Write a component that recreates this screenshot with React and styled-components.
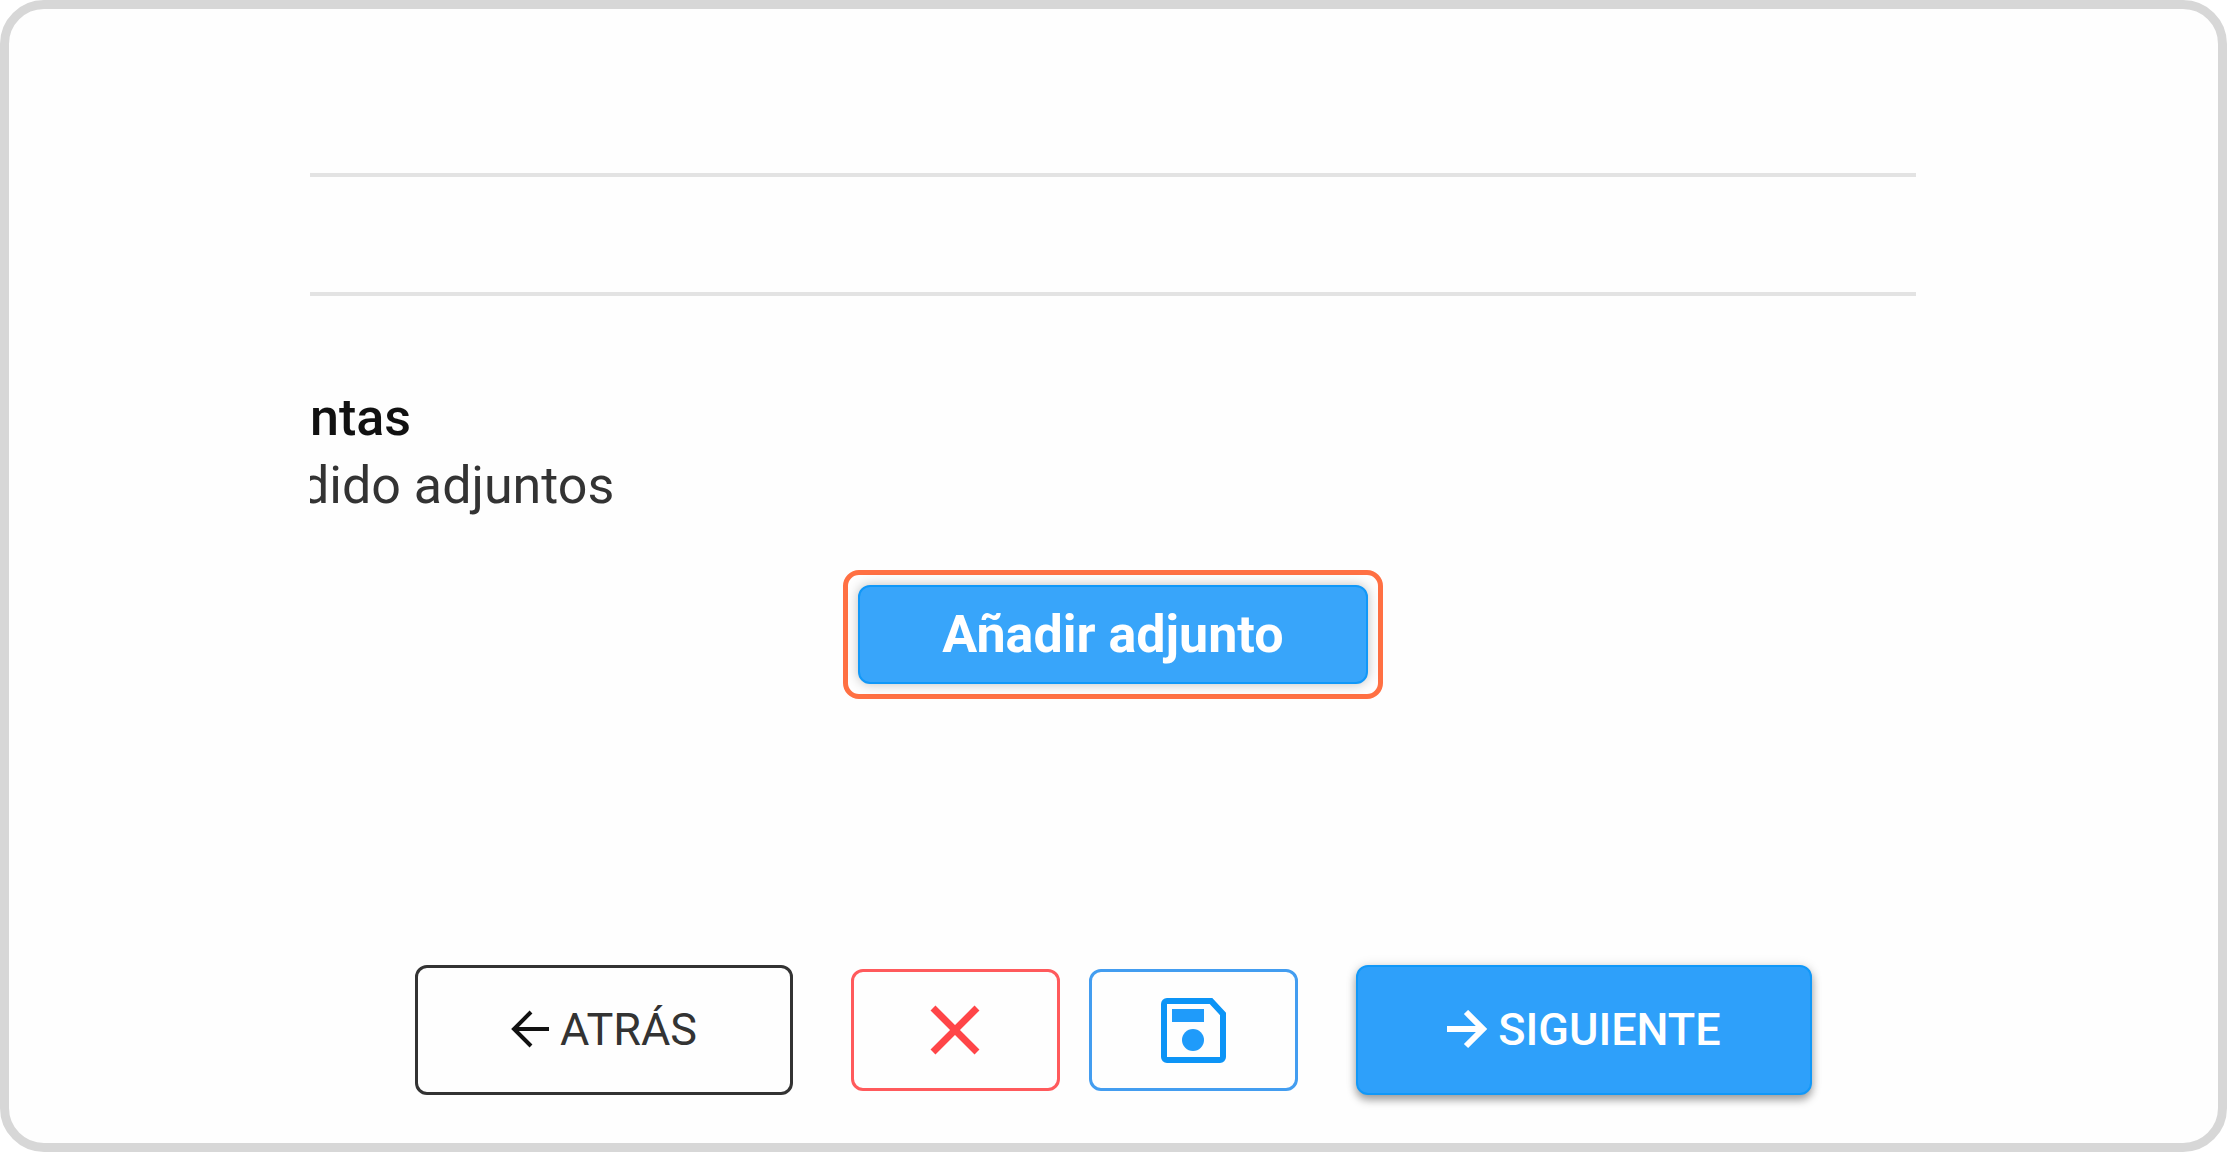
import React from "react"
import styled, { createGlobalStyle, css } from "styled-components"

const GlobalStyle = createGlobalStyle`
  * {
    box-sizing: border-box;
  }
  body {
    margin: 0;
    background: #fff;
    font-family: Roboto, "Liberation Sans", sans-serif;
  }
`;

const Frame = styled.div`
  display: flex;
  flex-direction: column;
  min-height: 100vh;
  padding: 0 302px 48px 301px;
  border: 9px solid #d7d7d7;
  border-radius: 44px;
  background: #fefefe;
`;

/*
* empty rows of the form, above the attachments
*/
const FormRow = styled.div`
  height: ${props => props.$tall ? '168px' : '119px'};
  border-bottom: 4px solid #e3e3e3;
`;

/*
* attachments block
*/
const Attachments = styled.section`
  display: flex;
  flex-direction: column;
  margin-top: 88px;
`;
const TextLine = styled.p`
  margin: 0;
  overflow: hidden;
  white-space: nowrap;
  font-size: 52px;
  line-height: 68px;
  color: #333;
`;
const Title = styled(TextLine).attrs({ as: 'h2' })`
  font-weight: 500;
  color: #111;
`;
// the line starts in the middle of its first letter
const Status = styled(TextLine)`
  text-indent: -10px;
`;
const Highlight = styled.div`
  align-self: center;
  margin-top: 50px;
  padding: 10px;
  border: 5px solid #ff7043;
  border-radius: 16px;
`;

const Button = styled.button`
  display: flex;
  align-items: center;
  justify-content: center;
  gap: 10px;
  padding: 0;
  border: 3px solid currentColor;
  border-radius: 12px;
  background: transparent;
  font-family: inherit;
  font-size: 45px;
  line-height: 52px;
  cursor: pointer;
`;
const filled = css`
  border: 2px solid #1198f8;
  background: ${props => props.$light ? '#38a5fa' : '#2ea0fa'};
  color: #fff;
`;
const AddButton = styled(Button)`
  ${filled}
  width: 510px;
  height: 99px;
  font-size: 52px;
  font-weight: 700;
  box-shadow: 0 0 12px rgba(0, 0, 0, 0.25);
`;
const BackButton = styled(Button)`
  width: 378px;
  height: 130px;
  color: #333;
`;
const NextButton = styled(Button)`
  ${filled}
  width: 456px;
  height: 130px;
  font-weight: 500;
  box-shadow: 0 5px 8px rgba(0, 0, 0, 0.35), 0 0 12px rgba(0, 0, 0, 0.1);
`;
const IconButton = styled(Button)`
  width: 209px;
  height: 122px;
  color: ${props => props.$danger ? '#ff5a5c' : '#439df0'};
`;

const Actions = styled.div`
  display: flex;
  align-items: center;
  justify-content: center;
  gap: 58px;
  margin-top: auto;
`;
const IconGroup = styled.div`
  display: flex;
  gap: 29px;
`;

function ArrowLeft() {
  return (
    <svg width="40" height="40" viewBox="0 0 40 40" fill="none" stroke="#111" strokeWidth="4" aria-hidden="true">
      <path d="M39 19H4M21 2L4 19l17 17" />
    </svg>
  )
}
function ArrowRight() {
  return (
    <svg width="42" height="40" viewBox="0 0 42 40" fill="none" stroke="#fff" strokeWidth="6" aria-hidden="true">
      <path d="M1 19h36M20 2l17 17-17 17" />
    </svg>
  )
}
function CloseIcon() {
  return (
    <svg width="50" height="50" viewBox="0 0 50 50" fill="none" stroke="#ff4548" strokeWidth="7" aria-hidden="true">
      <path d="M3 3l44 44M47 3L3 47" />
    </svg>
  )
}
function SaveIcon() {
  return (
    <svg width="65" height="65" viewBox="0 0 65 65" aria-hidden="true">
      <path
        d="M6 3h44l12 13v43a3 3 0 0 1-3 3H6a3 3 0 0 1-3-3V6a3 3 0 0 1 3-3z"
        fill="none"
        stroke="#0c94f6"
        strokeWidth="6"
      />
      <rect x="11" y="11" width="32" height="13" fill="#1f9bfa" />
      <circle cx="32" cy="42" r="11" fill="#1f9bfa" />
    </svg>
  )
}

export default function App() {
  return (
    <React.Fragment>
      <GlobalStyle />
      <Frame>
        <FormRow $tall />
        <FormRow />
        <Attachments>
          <Title>ntas</Title>
          <Status>dido adjuntos</Status>
          <Highlight>
            <AddButton type="button" $light>Añadir adjunto</AddButton>
          </Highlight>
        </Attachments>
        <Actions>
          <BackButton type="button"><ArrowLeft />ATRÁS</BackButton>
          <IconGroup>
            <IconButton type="button" $danger aria-label="Cancelar"><CloseIcon /></IconButton>
            <IconButton type="button" aria-label="Guardar"><SaveIcon /></IconButton>
          </IconGroup>
          <NextButton type="button"><ArrowRight />SIGUIENTE</NextButton>
        </Actions>
      </Frame>
    </React.Fragment>
  )
}
